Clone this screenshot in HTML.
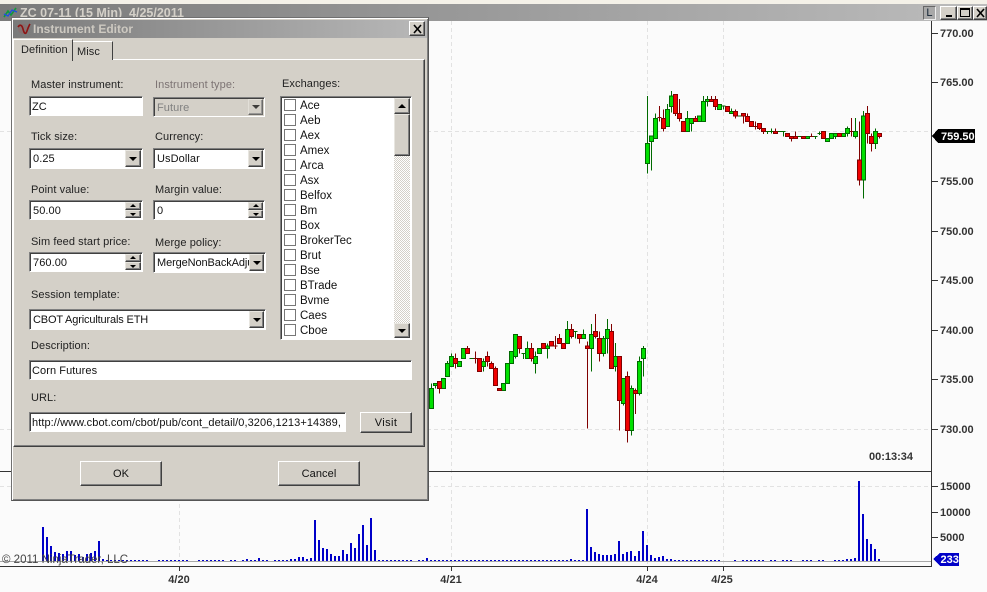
<!DOCTYPE html>
<html><head><meta charset="utf-8"><title>Instrument Editor</title>
<style>
*{box-sizing:border-box}
html,body{margin:0;padding:0;background:#fbfbfb}
body{width:987px;height:592px;position:relative;overflow:hidden;font:11px "Liberation Sans",Arial,sans-serif;letter-spacing:.08px;color:#222}
.a{position:absolute}
.t{position:absolute;white-space:nowrap;line-height:14px;height:14px;margin-top:1px}
.t.n{margin-top:0}
.p{position:absolute;left:940px;font:bold 11px/14px "Liberation Sans",sans-serif;color:#333;white-space:nowrap;letter-spacing:0}
.x{position:absolute;top:573px;width:40px;text-align:center;font:bold 11px/14px "Liberation Sans",sans-serif;color:#333;letter-spacing:0}
.in{position:absolute;background:#fff;border:1px solid;border-color:#808080 #fff #fff #808080;box-shadow:inset 1px 1px #404040;line-height:17px;padding:2px 0 0 3px;white-space:nowrap;overflow:hidden;color:#111}
.btn{position:absolute;background:#d4d0c8;border:1px solid;border-color:#fff #404040 #404040 #fff;box-shadow:inset -1px -1px #808080;text-align:center;color:#111}
.ab{position:absolute;background:#d4d0c8;border:1px solid;border-color:#e8e6e0 #404040 #404040 #e8e6e0;box-shadow:inset -1px -1px #808080}
.ar:after{content:"";position:absolute;left:50%;top:50%;margin:-2px 0 0 -4px;border:4px solid transparent;border-top:4px solid #000;border-bottom:0}
.ar.up:after{border-top:0;border-bottom:4px solid #000}
.ar.sp:after{margin:-1px 0 0 -3px;border-width:3px;border-bottom:0}
.ar.sp.up:after{border-width:0 3px;border-top:0;border-bottom:3px solid #000;margin-top:-2px}
.cb{position:absolute;left:284px;width:12px;height:12px;background:#fff;border:1px solid #777}
.li{position:absolute;left:300px;line-height:14px;height:14px;margin-top:1px;color:#111;font-size:11.5px;letter-spacing:0}
</style></head><body>

<svg class="a" style="left:0;top:0" width="987" height="592" viewBox="0 0 987 592">
<g fill="none" stroke="#e2e2e2" stroke-width="1" stroke-dasharray="4 3" shape-rendering="crispEdges">
<path d="M179.5 21V566M451.5 21V566M647.5 21V566M723.5 21V566"/>
<path d="M0 131.5H931M0 429.5H931M0 486.5H931"/>
</g>
<g shape-rendering="crispEdges">
<path d="M0 561.5H931" stroke="#a8a8a8" fill="none"/>
<path d="M110 560.5H149M158 560.5H189M198 560.5H225M230 560.5H237M242 560.5H269M274 560.5H313M378 560.5H413M418 560.5H585M654 560.5H721M734 560.5H737M742 560.5H765M770 560.5H777M782 560.5H793M802 560.5H813M818 560.5H825M834 560.5H877" stroke="#0000c8" stroke-width="1" stroke-dasharray="2 2" fill="none"/>
<path d="M43 561V527M47 561V537M51 561V546M55 561V552M59 561V553M63 561V554M67 561V551M71 561V551M75 561V555M79 561V554M83 561V557M87 561V554M91 561V553M95 561V551M99 561V541M103 561V559M107 561V560M247 561V559M259 561V558M291 561V559M295 561V559M299 561V557M303 561V557M307 561V559M311 561V558M315 561V520M319 561V540M323 561V548M327 561V549M331 561V554M335 561V556M339 561V556M343 561V550M347 561V554M351 561V543M355 561V548M359 561V534M363 561V525M367 561V545M371 561V518M375 561V550M427 561V558M571 561V559M587 561V509M591 561V547M595 561V552M599 561V554M603 561V555M607 561V555M611 561V555M615 561V554M619 561V541M623 561V554M627 561V552M631 561V551M635 561V556M639 561V551M643 561V531M647 561V545M651 561V555M655 561V558M659 561V557M663 561V556M667 561V559M671 561V559M847 561V559M851 561V559M855 561V558M859 561V481M863 561V514M867 561V539M871 561V544M875 561V549M879 561V559" stroke="#0000c8" stroke-width="2" fill="none"/>

<g transform="translate(630,80) scale(.33333)" stroke-width="3" fill="none">
<path stroke="#006a00" d="M52 48V280M64 168V272M76 100V175M112 72V140M124 33V97M172 93V155M184 115V155M220 48V124M232 48V80M280 78V88M304 85V100M412 155V162M424 145V160M460 154V170M556 169V177M568 154V165M604 160V177M616 160V177M652 139V169M676 114V175M700 93V355M736 145V207M274 78H286M322 108H334M406 155H418M418 154H430M442 154H454M454 154H466M502 169H514M550 169H562M562 160H574"/>
<path stroke="#800000" d="M88 78V125M100 88V155M136 43V108M148 57V125M196 108V125M244 48V64M256 48V90M316 88V116M340 100V130M352 100V125M376 124V148M388 130V150M400 145V162M436 145V160M484 169V185M496 154V175M544 160V169M664 114V170M688 124V317M712 78V190M724 160V215M748 160V175M82 113H94M370 139H382M538 169H550M658 154H670"/>
<path stroke="#006a00" fill="#00e000" d="M46 190H58V250H46zM58 168H70V185H58zM70 115H82V175H70zM106 88H118V140H106zM118 48H130V80H118zM166 115H178V155H166zM178 115H190V130H178zM202 108H214V124H202zM214 64H226V124H214zM226 58H238V64H226zM262 73H274V88H262zM298 94H310V100H298zM526 169H538V175H526zM586 175H598V184H586zM598 160H610V175H598zM610 160H622V169H610zM634 160H646V169H634zM646 145H658V160H646zM670 154H682V169H670zM694 108H706V300H694zM730 154H742V190H730z"/>
<path stroke="#800000" fill="#f00000" d="M94 115H106V145H94zM130 43H142V100H130zM142 100H154V115H142zM154 124H166V155H154zM190 115H202V124H190zM238 58H250V64H238zM250 58H262V80H250zM286 80H298V95H286zM310 94H322V108H310zM334 100H346V108H334zM346 110H358V124H346zM358 124H370V139H358zM382 130H394V145H382zM394 145H406V155H394zM430 155H442V160H430zM466 160H478V169H466zM478 169H490V175H478zM490 169H502V175H490zM514 169H526V175H514zM574 154H586V175H574zM622 160H634V169H622zM682 240H694V300H682zM706 100H718V160H706zM718 169H730V190H718zM742 160H754V169H742z"/>
</g>

<g transform="translate(425,310) scale(.33333)" stroke-width="3" fill="none">
<path stroke="#006a00" d="M19 220V295M31 220V235M67 153V200M79 130V169M175 145V185M271 73V145M295 130V147M307 94V145M331 124V191M367 100V146M427 33V100M451 64V85M475 58V85M499 42V185M535 78V140M547 27V130M571 99V185M595 205V286M619 226V377M643 139V256M655 108V200M133 145H145M289 130H301M445 64H457"/>
<path stroke="#800000" d="M43 214V250M91 130V176M127 108V130M151 124V160M187 124V170M199 154V175M211 169V226M283 80V130M319 99V155M391 78V117M403 72V100M439 42V85M463 73V100M487 94V355M511 12V85M523 64V155M559 42V175M583 139V362M607 184V398M631 235V312M145 145H157M385 108H397"/>
<path stroke="#006a00" fill="#00e000" d="M13 235H25V295H13zM25 220H37V226H25zM49 205H61V235H49zM61 160H73V200H61zM73 140H85V169H73zM97 154H109V169H97zM109 115H121V145H109zM169 154H181V169H169zM229 220H241V241H229zM241 160H253V220H241zM253 124H265V160H253zM265 73H277V139H265zM301 115H313V145H301zM325 139H337V160H325zM337 115H349V130H337zM361 108H373V115H361zM421 58H433V100H421zM469 73H481V85H469zM493 73H505V115H493zM529 85H541V130H529zM541 58H553V85H541zM565 139H577V169H565zM589 205H601V280H589zM613 235H625V361H613zM637 154H649V250H637zM649 115H661V145H649z"/>
<path stroke="#800000" fill="#f00000" d="M37 214H49V235H37zM85 145H97V160H85zM121 115H133V130H121zM157 145H169V184H157zM181 139H193V154H181zM193 160H205V175H193zM205 175H217V226H205zM217 235H229V241H217zM277 80H289V115H277zM313 115H325V145H313zM349 100H361V115H349zM373 94H385V108H373zM397 85H409V100H397zM409 100H421V115H409zM433 58H445V79H433zM457 73H469V85H457zM481 108H493V115H481zM505 64H517V79H505zM517 85H529V130H517zM553 64H565V175H553zM577 139H589V271H577zM601 199H613V361H601zM625 241H637V250H625z"/>
</g>

<path d="M931.5 20V566.5H0M0 471.5H931M179.5 566V571M451.5 566V571M647.5 566V571M723.5 566V571M932 33.5H938M932 82.5H938M932 181.5H938M932 231.5H938M932 280.5H938M932 330.5H938M932 379.5H938M932 429.5H938M932 486.5H938M932 512.5H938M932 537.5H938" stroke="#333" fill="none"/>
<path d="M932 136L938 129H975V143H938z" fill="#000"/>
<path d="M933 559L940 553H959V566H940z" fill="#0000c8"/>
</g>
</svg>

<div class="p" style="top:27px">770.00</div>
<div class="p" style="top:76px">765.00</div>
<div class="p" style="top:175px">755.00</div>
<div class="p" style="top:225px">750.00</div>
<div class="p" style="top:274px">745.00</div>
<div class="p" style="top:324px">740.00</div>
<div class="p" style="top:373px">735.00</div>
<div class="p" style="top:423px">730.00</div>
<div class="p" style="top:130px;left:941px;color:#fff">759.50</div>
<div class="p" style="top:480px">15000</div>
<div class="p" style="top:506px">10000</div>
<div class="p" style="top:531px">5000</div>
<div class="p" style="top:553px;left:940.5px;color:#fff">233</div>
<div class="p" style="top:450px;left:869px">00:13:34</div>
<div class="x" style="left:159px">4/20</div>
<div class="x" style="left:431px">4/21</div>
<div class="x" style="left:627px">4/24</div>
<div class="x" style="left:702px">4/25</div>
<div class="t n" style="left:2px;top:553px;font-size:11.5px;color:#444;letter-spacing:0">© 2011 NinjaTrader, LLC</div>

<!-- chart title bar -->
<div class="a" style="left:0;top:0;width:987px;height:4px;background:#f4f1e8"></div>
<div class="a" style="left:0;top:4px;width:987px;height:17px;background:linear-gradient(90deg,#7a7a7a,#bcbcbc)"></div>
<svg class="a" style="left:3px;top:6px" width="15" height="13"><path d="M1 11L5 5 8 9 13 2" stroke="#0f9a3a" fill="none" stroke-width="1.6"/><path d="M1 8L5 10 9 4 14 6" stroke="#1f50e0" fill="none" stroke-width="1.3"/></svg>
<div class="t n" style="left:20px;top:6px;font-weight:bold;font-size:12.5px;color:#d4d0c8;letter-spacing:0">ZC 07-11 (15 Min)&nbsp; 4/25/2011</div>
<div class="a" style="left:923px;top:6px;width:13px;height:14px;background:#a8a8a8;border:1px solid #666;border-right-color:#eee;border-bottom-color:#eee;font:11px/12px 'Liberation Sans',sans-serif;text-align:center;color:#123">L</div>
<div class="btn" style="left:940px;top:6px;width:17px;height:14px"><div class="a" style="left:5px;top:8px;width:6px;height:2px;background:#000"></div></div>
<div class="btn" style="left:957px;top:6px;width:16px;height:14px"><div class="a" style="left:2px;top:1px;width:10px;height:9px;border:1px solid #000;border-top-width:2px"></div></div>
<div class="btn" style="left:973px;top:6px;width:14px;height:14px"><svg class="a" style="left:1px;top:1px" width="11" height="10"><path d="M2 1L9 9M9 1L2 9" stroke="#000" stroke-width="1.6"/></svg></div>

<!-- dialog -->
<div class="a" style="left:11px;top:17px;width:418px;height:484px;background:#d4d0c8;border:1px solid;border-color:#707070 #555 #555 #707070;box-shadow:inset 1px 1px #fff,inset -1px -1px #808080"></div>
<div class="a" style="left:13px;top:20px;width:414px;height:18px;background:linear-gradient(90deg,#7a7a7a,#b8b8b8)"></div>
<svg class="a" style="left:17px;top:23px" width="15" height="13"><circle cx="6" cy="6" r="5" fill="#8a6a6a" opacity=".6"/><path d="M1 4C3 1 5 2 6 6S8 11 9 10 11 4 13 1" stroke="#8e1414" stroke-width="1.6" fill="none"/></svg>
<div class="t n" style="left:33px;top:22px;font-weight:bold;font-size:12px;color:#cdc9c1;letter-spacing:0">Instrument Editor</div>
<div class="btn" style="left:409px;top:21px;width:16px;height:15px"><svg class="a" style="left:2px;top:2px" width="11" height="10"><path d="M2 1L9 9M9 1L2 9" stroke="#000" stroke-width="1.6"/></svg></div>

<!-- tab panel -->
<div class="a" style="left:13px;top:59px;width:412px;height:388px;border:1px solid;border-color:#fff #404040 #404040 #fff;box-shadow:inset -1px -1px #808080"></div>
<div class="a" style="left:72px;top:41px;width:41px;height:19px;background:#d4d0c8;border:1px solid;border-color:#fff #404040 #fff #fff;border-bottom:0"></div>
<div class="t" style="left:77px;top:44px">Misc</div>
<div class="a" style="left:13px;top:39px;width:60px;height:22px;background:#d4d0c8;border:1px solid;border-color:#fff #404040 #d4d0c8 #fff;border-bottom:0"></div>
<div class="t" style="left:21px;top:42px">Definition</div>

<!-- labels -->
<div class="t" style="left:31px;top:77px">Master instrument:</div>
<div class="t" style="left:155px;top:77px;color:#7d7474">Instrument type:</div>
<div class="t" style="left:282px;top:76px">Exchanges:</div>
<div class="t" style="left:31px;top:129px">Tick size:</div>
<div class="t" style="left:155px;top:129px">Currency:</div>
<div class="t" style="left:31px;top:182px">Point value:</div>
<div class="t" style="left:155px;top:182px">Margin value:</div>
<div class="t" style="left:31px;top:234px">Sim feed start price:</div>
<div class="t" style="left:155px;top:235px">Merge policy:</div>
<div class="t" style="left:31px;top:287px">Session template:</div>
<div class="t" style="left:31px;top:338px">Description:</div>
<div class="t" style="left:31px;top:390px">URL:</div>

<!-- inputs -->
<div class="in" style="left:29px;top:96px;width:114px;height:20px;padding-left:2px">ZC</div>
<div class="in" style="left:153px;top:97px;width:112px;height:20px;background:#d4d0c8;color:#808080">Future</div>
<div class="ab ar" style="left:248px;top:99px;width:15px;height:16px;opacity:.7"></div>
<div class="in" style="left:29px;top:148px;width:114px;height:21px">0.25</div>
<div class="ab ar" style="left:125px;top:150px;width:16px;height:17px"></div>
<div class="in" style="left:153px;top:148px;width:112px;height:21px">UsDollar</div>
<div class="ab ar" style="left:248px;top:150px;width:15px;height:17px"></div>
<div class="in" style="left:29px;top:200px;width:114px;height:20px">50.00</div>
<div class="ab ar sp up" style="left:125px;top:202px;width:16px;height:8px"></div>
<div class="ab ar sp" style="left:125px;top:210px;width:16px;height:8px"></div>
<div class="in" style="left:153px;top:200px;width:112px;height:20px">0</div>
<div class="ab ar sp up" style="left:248px;top:202px;width:15px;height:8px"></div>
<div class="ab ar sp" style="left:248px;top:210px;width:15px;height:8px"></div>
<div class="in" style="left:29px;top:252px;width:114px;height:20px">760.00</div>
<div class="ab ar sp up" style="left:125px;top:254px;width:16px;height:8px"></div>
<div class="ab ar sp" style="left:125px;top:262px;width:16px;height:8px"></div>
<div class="in" style="left:153px;top:252px;width:113px;height:21px;letter-spacing:-.1px">MergeNonBackAdju</div>
<div class="ab ar" style="left:249px;top:254px;width:15px;height:17px"></div>
<div class="in" style="left:29px;top:309px;width:237px;height:21px;letter-spacing:-.15px">CBOT Agriculturals ETH</div>
<div class="ab ar" style="left:249px;top:311px;width:15px;height:17px"></div>
<div class="in" style="left:29px;top:360px;width:383px;height:20px;padding-left:2px">Corn Futures</div>
<div class="in" style="left:29px;top:412px;width:317px;height:20px;padding-left:2px">http://www.cbot.com/cbot/pub/cont_detail/0,3206,1213+14389,</div>
<div class="btn" style="left:360px;top:412px;width:52px;height:21px;line-height:21px;letter-spacing:.4px">Visit</div>
<div class="btn" style="left:80px;top:461px;width:82px;height:25px;line-height:25px">OK</div>
<div class="btn" style="left:278px;top:461px;width:82px;height:25px;line-height:25px">Cancel</div>

<!-- list -->
<div class="in" style="left:280px;top:96px;width:132px;height:244px;padding:0"></div>
<div class="a" style="left:394px;top:98px;width:16px;height:240px;background:repeating-conic-gradient(#fff 0 25%,#d4d0c8 0 50%) 0 0/2px 2px"></div>
<div class="ab ar up" style="left:394px;top:98px;width:16px;height:16px"></div>
<div class="ab" style="left:394px;top:114px;width:16px;height:42px"></div>
<div class="ab ar" style="left:394px;top:323px;width:16px;height:15px"></div>

<div class="cb" style="top:99px"></div><div class="li" style="top:98px">Ace</div>
<div class="cb" style="top:114px"></div><div class="li" style="top:113px">Aeb</div>
<div class="cb" style="top:129px"></div><div class="li" style="top:128px">Aex</div>
<div class="cb" style="top:144px"></div><div class="li" style="top:143px">Amex</div>
<div class="cb" style="top:159px"></div><div class="li" style="top:158px">Arca</div>
<div class="cb" style="top:174px"></div><div class="li" style="top:173px">Asx</div>
<div class="cb" style="top:189px"></div><div class="li" style="top:188px">Belfox</div>
<div class="cb" style="top:204px"></div><div class="li" style="top:203px">Bm</div>
<div class="cb" style="top:219px"></div><div class="li" style="top:218px">Box</div>
<div class="cb" style="top:234px"></div><div class="li" style="top:233px">BrokerTec</div>
<div class="cb" style="top:249px"></div><div class="li" style="top:248px">Brut</div>
<div class="cb" style="top:264px"></div><div class="li" style="top:263px">Bse</div>
<div class="cb" style="top:279px"></div><div class="li" style="top:278px">BTrade</div>
<div class="cb" style="top:294px"></div><div class="li" style="top:293px">Bvme</div>
<div class="cb" style="top:309px"></div><div class="li" style="top:308px">Caes</div>
<div class="cb" style="top:324px"></div><div class="li" style="top:323px">Cboe</div>
</body></html>
